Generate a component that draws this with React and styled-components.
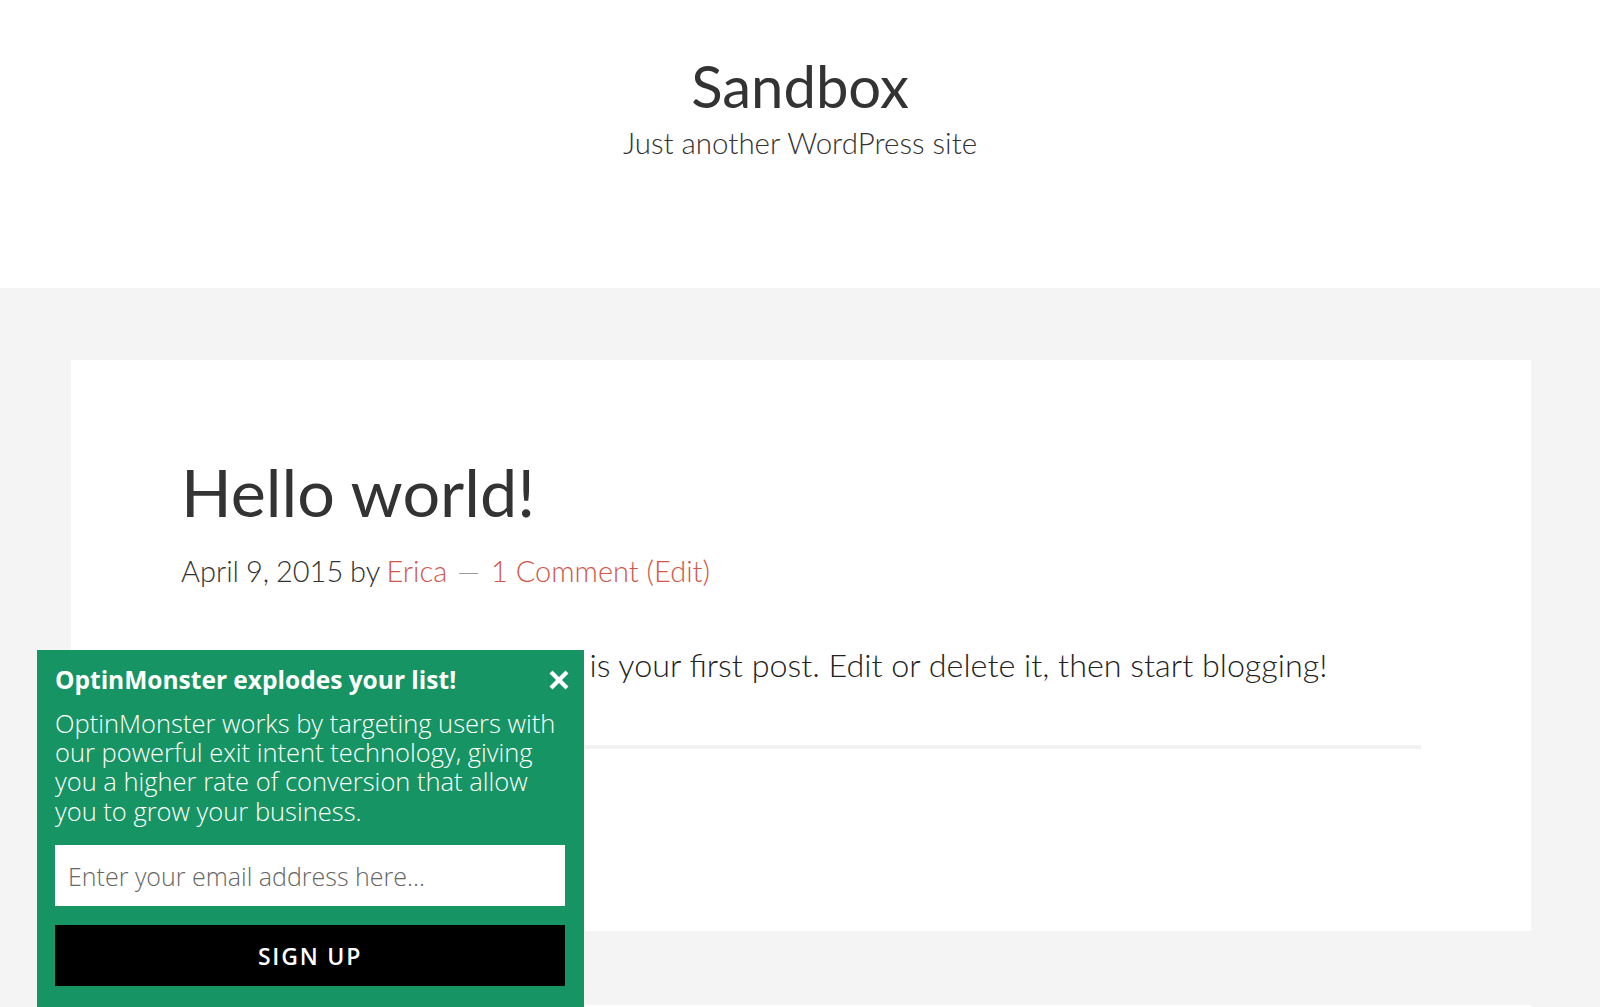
import React from 'react';
import styled, {createGlobalStyle} from 'styled-components';

const GlobalStyle = createGlobalStyle`
  html, body {
    margin: 0;
    padding: 0;
    background: #f4f4f4;
    font-family: Lato, "Liberation Sans", sans-serif;
    color: #333;
  }
  * { box-sizing: border-box; }
`;

const SiteHeader = styled.header`
  background: #fff;
  height: 288px;
  text-align: center;
  padding-top: 51px;
`;

const SiteTitle = styled.h1`
  margin: 0;
  font-size: 58px;
  font-weight: 400;
  line-height: 1.2;
  color: #333;
`;

const Tagline = styled.p`
  margin: 4px 0 0;
  font-size: 29.5px;
  font-weight: 300;
  line-height: 1.2;
  color: #333;
`;

const Main = styled.main`
  padding: 72px 69px 0 71px;
  display: flex;
  flex-direction: column;
  gap: 74px;
`;

const Card = styled.article`
  background: #fff;
  min-height: ${p => p.tall ? '571px' : '80px'};
  padding: 92px 110px 0;
`;

const PostTitle = styled.h2`
  margin: 0;
  font-size: 66.5px;
  font-weight: 400;
  line-height: 1.2;
  color: #333;
`;

const Meta = styled.p`
  margin: 22px 0 0;
  font-size: 29px;
  font-weight: 300;
  line-height: 1.2;
  color: #333;

  a {
    color: #d0574a;
    text-decoration: none;
  }
`;

const MetaDate = styled.span`
  word-spacing: -1px;
`;

const Dash = styled.span`
  color: #999;
  margin: 0 11px 0 10px;
`;

const Body = styled.p`
  margin: 57px 0 0;
  font-size: 32.3px;
  font-weight: 300;
  line-height: 1.2;
  color: #222;
`;

const Rule = styled.hr`
  margin: 61px 0 0;
  border: 0;
  height: 4px;
  background: #f2f2f2;
`;

const Popup = styled.aside`
  position: fixed;
  left: 37px;
  top: 650px;
  width: 547px;
  height: 380px;
  background: #179463;
  padding: 14px 19px 0 18px;
  font-family: "Open Sans", "Liberation Sans", sans-serif;
  color: #fff;
`;

const PopupHead = styled.div`
  display: flex;
  justify-content: space-between;
  align-items: center;
`;

const PopupTitle = styled.h3`
  margin: 0;
  font-size: 24.5px;
  font-weight: 700;
  line-height: 1.3;
`;

const Close = styled.button`
  background: none;
  border: 0;
  padding: 0;
  margin-right: -6px;
  color: #fff;
  width: 24px;
  height: 24px;
  display: flex;
  align-items: center;
  justify-content: center;
  cursor: pointer;
`;

const PopupText = styled.p`
  margin: 13px 0 0;
  font-size: 25.5px;
  font-weight: 300;
  line-height: 29.3px;
`;

const EmailInput = styled.input`
  display: block;
  width: 100%;
  height: 61px;
  margin-top: 19px;
  border: 0;
  padding: 0 13px;
  font-family: "Open Sans", "Liberation Sans", sans-serif;
  font-size: 25px;
  font-weight: 300;
  color: #333;
  background: #fff;
  outline: none;

  &::placeholder {
    color: #666;
  }
`;

const SignUp = styled.button`
  display: block;
  width: 100%;
  height: 61px;
  margin-top: 19px;
  border: 0;
  background: #000;
  color: #fff;
  font-family: "Open Sans", "Liberation Sans", sans-serif;
  font-size: 23px;
  font-weight: 600;
  letter-spacing: 1.8px;
  cursor: pointer;
`;

function CloseIcon() {
  return (
    <svg width="20" height="20" viewBox="0 0 20 20">
      <path d="M3.5 3.5 L16.5 16.5 M16.5 3.5 L3.5 16.5" stroke="#fff" strokeWidth="4.2" strokeLinecap="square"/>
    </svg>
  );
}

export default function App() {
  return (
    <>
      <GlobalStyle/>
      <SiteHeader>
        <SiteTitle>Sandbox</SiteTitle>
        <Tagline>Just another WordPress site</Tagline>
      </SiteHeader>
      <Main>
        <Card tall>
          <PostTitle>Hello world!</PostTitle>
          <Meta>
            <MetaDate>April 9, 2015 by </MetaDate><a href="#">Erica</a><Dash>—</Dash><a href="#">1 Comment (Edit)</a>
          </Meta>
          <Body>Welcome to WordPress. This is your first post. Edit or delete it, then start blogging!</Body>
          <Rule/>
        </Card>
        <Card/>
      </Main>
      <Popup>
        <PopupHead>
          <PopupTitle>OptinMonster explodes your list!</PopupTitle>
          <Close aria-label="Close"><CloseIcon/></Close>
        </PopupHead>
        <PopupText>
          OptinMonster works by targeting users with our powerful exit intent technology, giving you a higher rate of conversion that allow you to grow your business.
        </PopupText>
        <EmailInput placeholder="Enter your email address here..."/>
        <SignUp>SIGN UP</SignUp>
      </Popup>
    </>
  );
}
